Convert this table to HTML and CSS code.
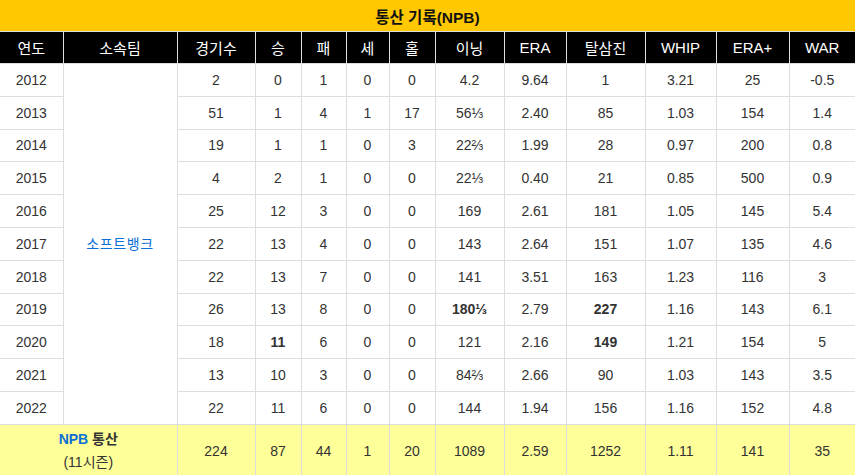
FILE: index.html
```html
<!DOCTYPE html>
<html lang="ko">
<head>
<meta charset="utf-8">
<title>통산 기록(NPB)</title>
<link rel="stylesheet" href="styles.css">
</head>
<body>
<table class="stats">
  <colgroup>
    <col class="c-year"><col class="c-team"><col class="c-g"><col class="c-w"><col class="c-l"><col class="c-s"><col class="c-h"><col class="c-ip"><col class="c-era"><col class="c-so"><col class="c-whip"><col class="c-eraplus"><col class="c-war">
  </colgroup>
  <thead>
    <tr class="title-row"><th colspan="13">통산 기록(NPB)</th></tr>
    <tr class="head-row">
      <th>연도</th><th>소속팀</th><th>경기수</th><th>승</th><th>패</th><th>세</th><th>홀</th><th>이닝</th><th>ERA</th><th>탈삼진</th><th>WHIP</th><th>ERA+</th><th>WAR</th>
    </tr>
  </thead>
  <tbody>
    <tr><td>2012</td><td rowspan="11" class="team">소프트뱅크</td><td>2</td><td>0</td><td>1</td><td>0</td><td>0</td><td>4.2</td><td>9.64</td><td>1</td><td>3.21</td><td>25</td><td>-0.5</td></tr>
    <tr><td>2013</td><td>51</td><td>1</td><td>4</td><td>1</td><td>17</td><td>56⅓</td><td>2.40</td><td>85</td><td>1.03</td><td>154</td><td>1.4</td></tr>
    <tr><td>2014</td><td>19</td><td>1</td><td>1</td><td>0</td><td>3</td><td>22⅔</td><td>1.99</td><td>28</td><td>0.97</td><td>200</td><td>0.8</td></tr>
    <tr><td>2015</td><td>4</td><td>2</td><td>1</td><td>0</td><td>0</td><td>22⅓</td><td>0.40</td><td>21</td><td>0.85</td><td>500</td><td>0.9</td></tr>
    <tr><td>2016</td><td>25</td><td>12</td><td>3</td><td>0</td><td>0</td><td>169</td><td>2.61</td><td>181</td><td>1.05</td><td>145</td><td>5.4</td></tr>
    <tr><td>2017</td><td>22</td><td>13</td><td>4</td><td>0</td><td>0</td><td>143</td><td>2.64</td><td>151</td><td>1.07</td><td>135</td><td>4.6</td></tr>
    <tr><td>2018</td><td>22</td><td>13</td><td>7</td><td>0</td><td>0</td><td>141</td><td>3.51</td><td>163</td><td>1.23</td><td>116</td><td>3</td></tr>
    <tr><td>2019</td><td>26</td><td>13</td><td>8</td><td>0</td><td>0</td><td class="b">180⅓</td><td>2.79</td><td class="b">227</td><td>1.16</td><td>143</td><td>6.1</td></tr>
    <tr><td>2020</td><td>18</td><td class="b">11</td><td>6</td><td>0</td><td>0</td><td>121</td><td>2.16</td><td class="b">149</td><td>1.21</td><td>154</td><td>5</td></tr>
    <tr><td>2021</td><td>13</td><td>10</td><td>3</td><td>0</td><td>0</td><td>84⅔</td><td>2.66</td><td>90</td><td>1.03</td><td>143</td><td>3.5</td></tr>
    <tr><td>2022</td><td>22</td><td>11</td><td>6</td><td>0</td><td>0</td><td>144</td><td>1.94</td><td>156</td><td>1.16</td><td>152</td><td>4.8</td></tr>
  </tbody>
  <tfoot>
    <tr class="total">
      <td colspan="2"><span class="npb">NPB</span> <b>통산</b><br>(11시즌)</td>
      <td>224</td><td>87</td><td>44</td><td>1</td><td>20</td><td>1089</td><td>2.59</td><td>1252</td><td>1.11</td><td>141</td><td>35</td>
    </tr>
  </tfoot>
</table>
</body>
</html>
```

FILE: styles.css
```css
html, body {
  margin: 0;
  padding: 0;
  background: #fff;
}

.stats {
  width: 855px;
  border-collapse: collapse;
  table-layout: fixed;
  font-family: "Liberation Sans", "Noto Sans CJK KR", sans-serif;
  font-size: 14px;
  color: #333;
}

.c-year { width: 63px; }
.c-team { width: 114px; }
.c-g { width: 78px; }
.c-w { width: 46px; }
.c-l { width: 45px; }
.c-s { width: 43px; }
.c-h { width: 46px; }
.c-ip { width: 69px; }
.c-era { width: 62px; }
.c-so { width: 79px; }
.c-whip { width: 71px; }
.c-eraplus { width: 73px; }
.c-war { width: 66px; }

.stats th,
.stats td {
  border: 1px solid #ddd;
  text-align: center;
  padding: 0;
}

.title-row th {
  background: #ffc800;
  color: #111;
  font-weight: bold;
  font-size: 15.5px;
  height: 31px;
  border-top: none;
  border-left: none;
  border-right: none;
}

.head-row th {
  background: #000;
  color: #fff;
  font-weight: normal;
  font-size: 15px;
  height: 31px;
}

.stats tbody td {
  height: 31.8px;
  line-height: 18px;
}

.stats tr > :first-child { border-left: none; }
.stats tr > :last-child { border-right: none; }

.team {
  color: #0b6fd6;
  letter-spacing: 0.6px;
  vertical-align: middle;
}

.b { font-weight: bold; }

.total td {
  background: #ffff99;
  height: 50px;
  line-height: 23px;
  vertical-align: top;
  padding-top: 3px;
}

.total td:not(:first-child) {
  vertical-align: middle;
  padding-top: 0;
}

.npb {
  color: #0b6fd6;
  font-weight: bold;
}
```
